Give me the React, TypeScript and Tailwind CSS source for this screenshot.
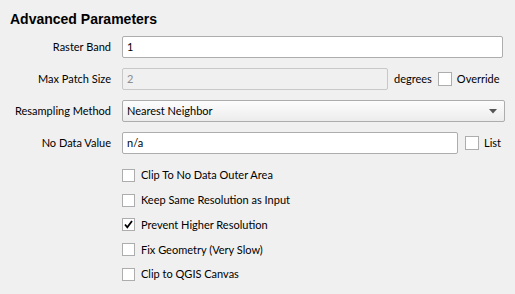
import React from "react";

const Check = ({ checked, label }: { checked?: boolean; label: string }) => (
  <div className="flex items-center h-[24.8px]">
    <div className="w-[13px] h-[13px] bg-white border border-[#adadad] flex items-center justify-center">
      {checked && (
        <svg width="11" height="11" viewBox="0 0 11 11">
          <path d="M2 5.5 L4.3 8.3 L9 2" fill="none" stroke="#000" strokeWidth="1.8" />
        </svg>
      )}
    </div>
    <span className="ml-[6px]">{label}</span>
  </div>
);

const SmallCheck = ({ label }: { label: string }) => (
  <div className="flex items-center">
    <div className="w-[14px] h-[14px] bg-white border border-[#adadad]" />
    <span className="ml-[5px]">{label}</span>
  </div>
);

export default function App() {
  return (
    <div
      className="w-[515px] h-[294px] bg-[#f0f0f0] text-[11px] text-black overflow-hidden"
      style={{ fontFamily: "Lato, 'Liberation Sans', sans-serif" }}
    >
      <div
        className="pl-[10px] pt-[11px] h-[36px] text-[14px] font-bold leading-[17px]"
        style={{ fontFamily: "'Liberation Sans', Arial, sans-serif" }}
      >
        Advanced Parameters
      </div>
      <div className="grid grid-cols-[111px_1fr] gap-x-[11px] gap-y-[10px] pr-[10px]">
        <div className="flex items-center justify-end h-[22px]">Raster Band</div>
        <div className="h-[22px] bg-white border border-[#adadad] rounded-[2px] flex items-center pl-[4px] mr-[2px]">1</div>

        <div className="flex items-center justify-end h-[22px]">Max Patch Size</div>
        <div className="flex items-center h-[22px]">
          <div className="w-[266px] h-[22px] bg-[#f0f0f0] border border-[#c8c8c8] rounded-[2px] flex items-center pl-[4px] text-[#8c8c8c]">2</div>
          <span className="ml-[6px]">degrees</span>
          <div className="ml-[6px]">
            <SmallCheck label="Override" />
          </div>
        </div>

        <div className="flex items-center justify-end h-[22px]">Resampling Method</div>
        <div className="h-[22px] bg-gradient-to-b from-[#fdfdfd] to-[#ececec] border border-[#adadad] rounded-[2px] flex items-center justify-between pl-[4px] pr-[7px]">
          <span>Nearest Neighbor</span>
          <svg width="8" height="5" viewBox="0 0 8 5">
            <path d="M0 0 L8 0 L4 4.5 Z" fill="#555" />
          </svg>
        </div>

        <div className="flex items-center justify-end h-[22px]">No Data Value</div>
        <div className="flex items-center h-[22px]">
          <div className="w-[336px] h-[22px] bg-white border border-[#adadad] rounded-[2px] flex items-center pl-[4px]">n/a</div>
          <div className="ml-[7px]">
            <SmallCheck label="List" />
          </div>
        </div>
      </div>
      <div className="pl-[122px] pt-[9px] flex flex-col">
        <Check label="Clip To No Data Outer Area" />
        <Check label="Keep Same Resolution as Input" />
        <Check checked label="Prevent Higher Resolution" />
        <Check label="Fix Geometry (Very Slow)" />
        <Check label="Clip to QGIS Canvas" />
      </div>
    </div>
  );
}
